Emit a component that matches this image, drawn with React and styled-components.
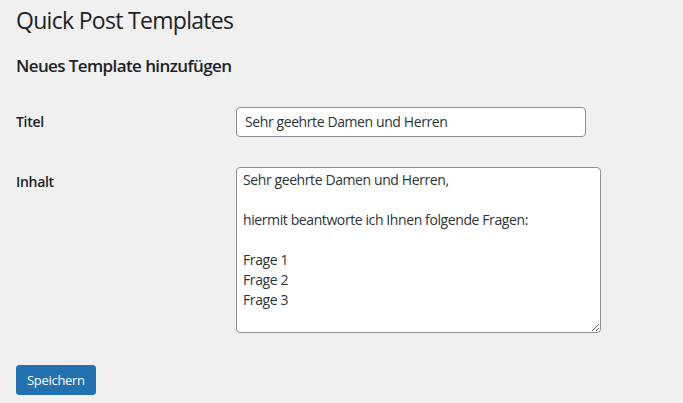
import React from "react";
import styled, { createGlobalStyle } from "styled-components";

const GlobalStyle = createGlobalStyle`
  html, body {
    margin: 0;
    padding: 0;
    background: #f0f0f1;
  }
  body {
    font-family: "Open Sans", "Noto Sans", sans-serif;
    color: #1d2327;
    font-size: 13px;
  }
`;

const StyledWrap = styled.div`
  padding: 6px 16px 0;
`;

const StyledTitle = styled.h1`
  margin: 0;
  font-size: 23px;
  font-weight: 400;
  line-height: 1.3;
  letter-spacing: -0.7px;
`;

const StyledSubtitle = styled.h2`
  margin: 19px 0 0;
  font-size: 17px;
  font-weight: 600;
  line-height: 1.3;
  letter-spacing: -0.6px;
`;

const StyledFormTable = styled.div`
  display: grid;
  grid-template-columns: 220px 1fr;
  margin-top: 15px;
`;

const StyledLabel = styled.label`
  padding: 21px 10px 0 0;
  font-size: 14px;
  font-weight: 600;
  line-height: 1.3;
  letter-spacing: -0.3px;
`;

const StyledField = styled.div`
  padding: 15px 0;
`;

const StyledInput = styled.input`
  box-sizing: border-box;
  width: ${(p) => p.$width}px;
  height: 30px;
  margin: 0;
  padding: 0 8px;
  border: 1px solid #8c8f94;
  border-radius: 4px;
  background: #fff;
  color: #2c3338;
  font-family: inherit;
  font-size: 14px;
  line-height: 2;
  letter-spacing: -0.4px;
  outline: none;
`;

const StyledTextarea = styled.textarea`
  display: block;
  box-sizing: border-box;
  width: ${(p) => p.$width}px;
  height: ${(p) => p.$height}px;
  margin: 0;
  padding: 2px 6px;
  border: 1px solid #8c8f94;
  border-radius: 4px;
  background: #fff;
  color: #2c3338;
  font-family: inherit;
  font-size: 14px;
  line-height: 20px;
  letter-spacing: -0.4px;
  outline: none;
`;

const StyledButton = styled.button`
  display: block;
  margin-top: 17px;
  height: 30px;
  padding: 0 10px;
  border: 1px solid #2271b1;
  border-radius: 3px;
  background: #2271b1;
  color: #fff;
  font-family: inherit;
  font-size: 13px;
  line-height: 28px;
  letter-spacing: -0.3px;
  cursor: pointer;
`;

const content = `Sehr geehrte Damen und Herren,

hiermit beantworte ich Ihnen folgende Fragen:

Frage 1
Frage 2
Frage 3`;

const App = () => {
  return (
    <StyledWrap>
      <GlobalStyle />
      <StyledTitle>Quick Post Templates</StyledTitle>
      <StyledSubtitle>Neues Template hinzufügen</StyledSubtitle>
      <StyledFormTable>
        <StyledLabel htmlFor="title">Titel</StyledLabel>
        <StyledField>
          <StyledInput
            id="title"
            $width={350}
            defaultValue="Sehr geehrte Damen und Herren"
          />
        </StyledField>
        <StyledLabel htmlFor="content">Inhalt</StyledLabel>
        <StyledField>
          <StyledTextarea
            id="content"
            $width={365}
            $height={166}
            defaultValue={content}
          />
        </StyledField>
      </StyledFormTable>
      <StyledButton type="button">Speichern</StyledButton>
    </StyledWrap>
  );
};

export default App;
